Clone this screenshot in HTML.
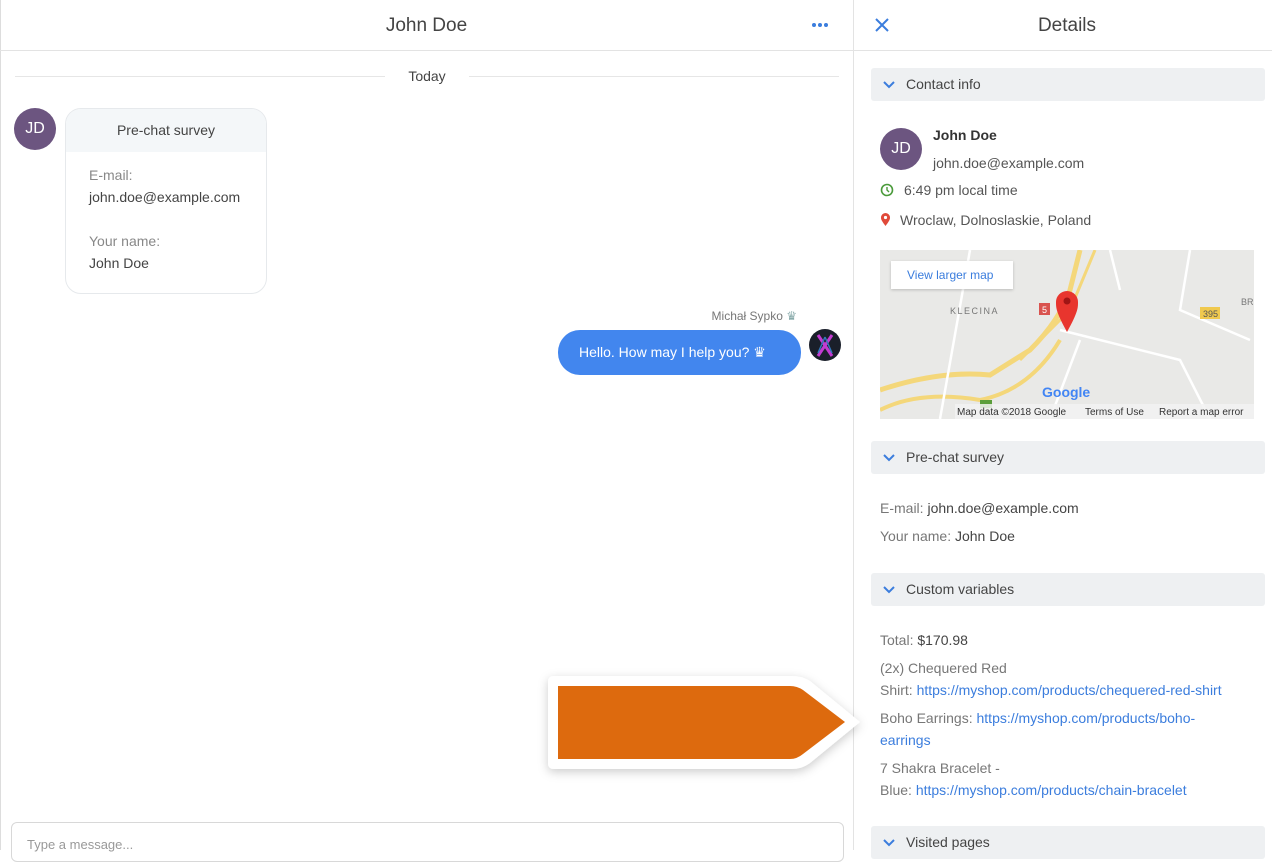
<!DOCTYPE html>
<html><head><meta charset="utf-8"><style>
*{box-sizing:border-box;margin:0;padding:0}
body{width:1272px;height:850px;overflow:hidden;background:#fff;font-family:"Liberation Sans",sans-serif;color:#424242;position:relative}
.a{position:absolute}
.sec{position:absolute;left:871px;width:394px;height:33px;background:#eef0f2;border-radius:3px;font-size:14px;line-height:33px;padding-left:35px;color:#444}
.sec svg{position:absolute;left:12px;top:13px}
.t{position:absolute;font-size:14px;color:#555;white-space:nowrap}
a{color:#3b7ddd;text-decoration:none}
</style></head><body>
<div class="a" style="left:0;top:0;width:1px;height:850px;background:#ddd"></div>
<div class="a" style="left:853px;top:0;width:1px;height:850px;background:#e3e3e3"></div>
<div class="a" style="left:0;top:50px;width:1272px;height:1px;background:#e3e3e3"></div>
<div class="a" style="left:0;top:15px;width:853px;text-align:center;font-size:19px;color:#444">John Doe</div>
<div class="a" style="left:812px;top:23px;width:20px;height:4px;display:flex;gap:2px"><i style="width:4px;height:4px;border-radius:2px;background:#3b7ddd;display:block"></i><i style="width:4px;height:4px;border-radius:2px;background:#3b7ddd;display:block"></i><i style="width:4px;height:4px;border-radius:2px;background:#3b7ddd;display:block"></i></div>
<div class="a" style="left:15px;top:76px;width:370px;height:1px;background:#e6e6e6"></div>
<div class="a" style="left:469px;top:76px;width:370px;height:1px;background:#e6e6e6"></div>
<div class="a" style="left:385px;top:68px;width:84px;text-align:center;font-size:14px;color:#444">Today</div>
<div class="a" style="left:14px;top:108px;width:42px;height:42px;border-radius:50%;background:#6c5580;color:#fff;font-size:16px;line-height:42px;text-align:center">JD</div>
<div class="a" style="left:65px;top:108px;width:202px;height:186px;border:1px solid #e6e9ec;border-radius:16px;overflow:hidden">
 <div style="height:43px;background:#f4f7f9;text-align:center;line-height:43px;font-size:14px;color:#444">Pre-chat survey</div>
 <div style="padding:12px 0 0 23px;font-size:14px;line-height:22px">
  <div style="color:#888">E-mail:</div><div style="color:#444">john.doe@example.com</div>
  <div style="color:#888;margin-top:22px">Your name:</div><div style="color:#444">John Doe</div>
 </div>
</div>
<div class="a" style="left:600px;top:309px;width:197px;text-align:right;font-size:12px;color:#777">Michał Sypko <span style="color:#8aa">♛</span></div>
<div class="a" style="left:558px;top:330px;width:243px;height:45px;border-radius:22px;background:#4286ee;color:#fff;font-size:14px;line-height:45px;padding-left:21px">Hello. How may I help you? ♛</div>
<div class="a" style="left:809px;top:329px;width:32px;height:32px;border-radius:50%;background:#1a1f2a;overflow:hidden"><svg width="32" height="32"><path d="M9 6L23 27M23 6L9 27" stroke="#c23bd1" stroke-width="3"/><path d="M16 8L9 24M16 8L23 24" stroke="#37b" stroke-width="1.5"/></svg></div>
<svg class="a" style="left:540px;top:668px;overflow:visible" width="330" height="110">
 <defs><filter id="s" x="-10%" y="-30%" width="120%" height="160%"><feDropShadow dx="0" dy="3" stdDeviation="5" flood-color="#000" flood-opacity="0.2"/></filter></defs>
 <path d="M14 8H252Q262 8 270 13L320 54L270 95Q262 101 252 101H14Q8 101 8 95V14Q8 8 14 8Z" fill="#fff" filter="url(#s)"/>
 <path d="M18 18H250Q257 18 263 22L305 54L263 86Q257 91 250 91H18Z" fill="#dd6a0e"/>
</svg>
<div class="a" style="left:11px;top:822px;width:833px;height:40px;border:1px solid #d8d8d8;border-radius:6px;font-size:13px;color:#999;padding:14px 0 0 15px">Type a message...</div>
<svg class="a" style="left:875px;top:18px" width="14" height="14"><path d="M1 1L13 13M13 1L1 13" stroke="#3b7ddd" stroke-width="2"/></svg>
<div class="a" style="left:862px;top:15px;width:410px;text-align:center;font-size:19px;color:#444">Details</div>
<div class="sec" style="top:68px"><svg width="12" height="8"><path d="M1 1L6 6L11 1" stroke="#3b7ddd" stroke-width="2" fill="none"/></svg>Contact info</div>
<div class="a" style="left:880px;top:128px;width:42px;height:42px;border-radius:50%;background:#6c5580;color:#fff;font-size:16px;line-height:42px;text-align:center">JD</div>
<div class="t" style="left:933px;top:127px;font-weight:bold;color:#333">John Doe</div>
<div class="t" style="left:933px;top:155px">john.doe@example.com</div>
<svg class="a" style="left:880px;top:183px" width="14" height="14"><circle cx="7" cy="7" r="5.5" stroke="#4a9a3a" stroke-width="1.6" fill="none"/><path d="M7 4V7L9 9" stroke="#4a9a3a" stroke-width="1.4" fill="none"/></svg>
<div class="t" style="left:904px;top:182px">6:49 pm local time</div>
<svg class="a" style="left:880px;top:212px" width="11" height="15"><path d="M5.5 14C1 8 1 7 1 5.5A4.5 4.5 0 0 1 10 5.5C10 7 10 8 5.5 14Z" fill="#e04a3a"/><circle cx="5.5" cy="5.5" r="1.6" fill="#fff"/></svg>
<div class="t" style="left:900px;top:212px">Wroclaw, Dolnoslaskie, Poland</div>
<div class="a" style="left:880px;top:250px;width:374px;height:169px;background:#e9e9e7;overflow:hidden">
<svg width="374" height="169">
 <path d="M0 140Q60 120 110 125L150 100Q180 70 190 40L200 0" stroke="#f4d77a" stroke-width="5" fill="none"/>
 <path d="M0 160Q40 140 100 150Q150 140 180 90" stroke="#f4d77a" stroke-width="4" fill="none"/>
 <path d="M140 110L190 60L215 0" stroke="#f4d77a" stroke-width="3" fill="none"/>
 <path d="M180 80L300 110L330 169M200 90L170 169M310 0L300 60L370 90M60 169L90 0M230 0L240 40" stroke="#fff" stroke-width="2.5" fill="none"/>
 <rect x="320" y="57" width="20" height="12" fill="#f0c94e"/><text x="323" y="67" font-size="9" fill="#555">395</text>
 <rect x="159" y="53" width="11" height="12" fill="#d9534f"/><text x="162" y="63" font-size="9" fill="#fff">5</text>
 <text x="70" y="64" font-size="9" fill="#777" letter-spacing="1.5">KLECINA</text>
 <text x="361" y="55" font-size="9" fill="#777">BR</text>
 <rect x="100" y="150" width="12" height="8" fill="#5a9e3a"/>
 <path d="M187 82C176 62 176 58 176 52A11 11 0 0 1 198 52C198 58 198 62 187 82Z" fill="#e8352e"/><circle cx="187" cy="51" r="3.5" fill="#a01515"/>
 <text x="162" y="147" font-size="14" fill="#4285f4" font-weight="bold">Google</text>
 <rect x="75" y="154" width="299" height="15" fill="#f2f2f2" opacity=".85"/>
 <text x="77" y="165" font-size="10" fill="#333">Map data ©2018 Google</text>
 <text x="205" y="165" font-size="10" fill="#333">Terms of Use</text>
 <text x="279" y="165" font-size="10" fill="#333">Report a map error</text>
</svg>
<div class="a" style="left:11px;top:11px;width:122px;height:28px;background:#fff;box-shadow:0 1px 3px rgba(0,0,0,.2);color:#3b7ddd;font-size:12px;line-height:28px;padding-left:16px">View larger map</div>
</div>
<div class="sec" style="top:441px"><svg width="12" height="8"><path d="M1 1L6 6L11 1" stroke="#3b7ddd" stroke-width="2" fill="none"/></svg>Pre-chat survey</div>
<div class="t" style="left:880px;top:500px;color:#777">E-mail: <span style="color:#444">john.doe@example.com</span></div>
<div class="t" style="left:880px;top:528px;color:#777">Your name: <span style="color:#444">John Doe</span></div>
<div class="sec" style="top:573px"><svg width="12" height="8"><path d="M1 1L6 6L11 1" stroke="#3b7ddd" stroke-width="2" fill="none"/></svg>Custom variables</div>
<div class="t" style="left:880px;top:632px;color:#777">Total: <span style="color:#444">$170.98</span></div>
<div class="t" style="left:880px;top:660px;color:#777">(2x) Chequered Red</div>
<div class="t" style="left:880px;top:682px;color:#777">Shirt: <a>https://myshop.com/products/chequered-red-shirt</a></div>
<div class="t" style="left:880px;top:710px;color:#777">Boho Earrings: <a>https://myshop.com/products/boho-</a></div>
<div class="t" style="left:880px;top:732px"><a>earrings</a></div>
<div class="t" style="left:880px;top:760px;color:#777">7 Shakra Bracelet -</div>
<div class="t" style="left:880px;top:782px;color:#777">Blue: <a>https://myshop.com/products/chain-bracelet</a></div>
<div class="sec" style="top:826px"><svg width="12" height="8"><path d="M1 1L6 6L11 1" stroke="#3b7ddd" stroke-width="2" fill="none"/></svg>Visited pages</div>
</body></html>
